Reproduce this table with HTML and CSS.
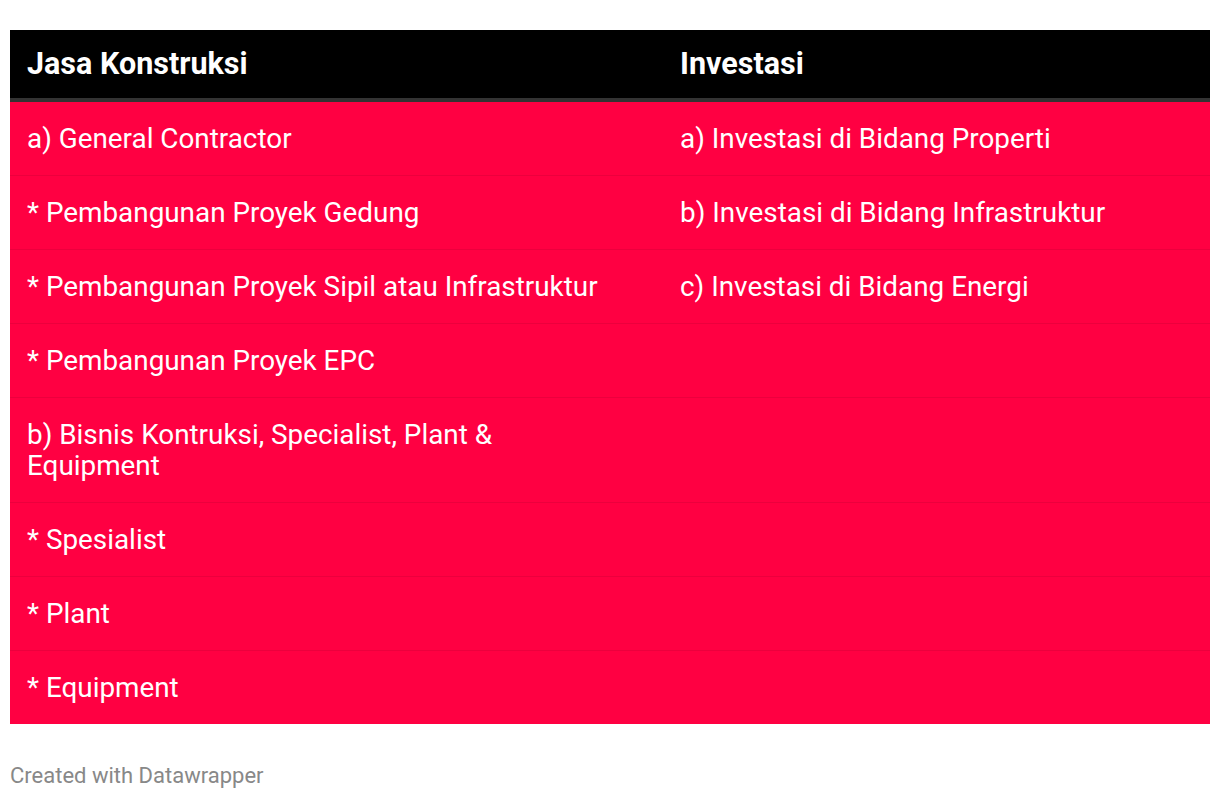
FILE: index.html
```html
<!DOCTYPE html>
<html>
<head>
<meta charset="utf-8">
<link rel="stylesheet" href="styles.css">
</head>
<body>
<div class="chart">
  <div class="table">
    <div class="row head">
      <div class="cell c1">Jasa Konstruksi</div>
      <div class="cell c2">Investasi</div>
    </div>
    <div class="row">
      <div class="cell c1">a) General Contractor</div>
      <div class="cell c2">a) Investasi di Bidang Properti</div>
    </div>
    <div class="row">
      <div class="cell c1">* Pembangunan Proyek Gedung</div>
      <div class="cell c2">b) Investasi di Bidang Infrastruktur</div>
    </div>
    <div class="row">
      <div class="cell c1">* Pembangunan Proyek Sipil atau Infrastruktur</div>
      <div class="cell c2">c) Investasi di Bidang Energi</div>
    </div>
    <div class="row">
      <div class="cell c1">* Pembangunan Proyek EPC</div>
      <div class="cell c2"></div>
    </div>
    <div class="row">
      <div class="cell c1">b) Bisnis Kontruksi, Specialist, Plant &amp; Equipment</div>
      <div class="cell c2"></div>
    </div>
    <div class="row">
      <div class="cell c1">* Spesialist</div>
      <div class="cell c2"></div>
    </div>
    <div class="row">
      <div class="cell c1">* Plant</div>
      <div class="cell c2"></div>
    </div>
    <div class="row last">
      <div class="cell c1">* Equipment</div>
      <div class="cell c2"></div>
    </div>
  </div>
  <div class="footer">Created with Datawrapper</div>
</div>
</body>
</html>
```
FILE: styles.css
```css
* { box-sizing: border-box; }
html, body { margin: 0; padding: 0; background: #fff; }
body { font-family: Roboto, "Liberation Sans", sans-serif; }
.chart { padding: 30px 10px 0 10px; }
.table { background: #ff0042; color: #fff; }
.row {
  display: grid;
  grid-template-columns: 653px 1fr;
  border-bottom: 1px solid #ec003d;
}
.row.last { border-bottom: none; }
.cell {
  font-size: 27.85px;
  font-weight: 400;
  line-height: 31px;
  padding: 21px 17px 21px 17px;
}
.c1 { padding-right: 50px; }
.head { background: #000; border-bottom: 4px solid #333; }
.head .cell {
  font-size: 30.5px;
  font-weight: 700;
  padding-top: 18px;
  padding-bottom: 19px;
}
.footer {
  margin-top: 40px;
  font-size: 22px;
  color: #888;
  line-height: 24px;
}
```
